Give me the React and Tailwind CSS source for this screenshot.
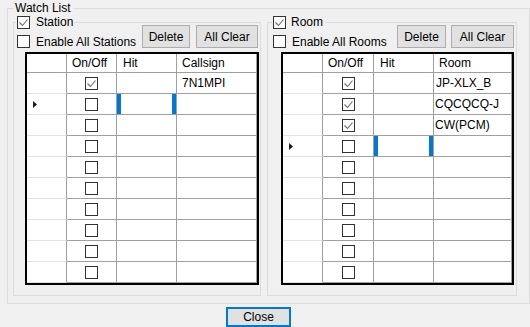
import React from "react";

const CheckMark = () => (
  <svg width="11" height="11" viewBox="0 0 11 11" className="block">
    <path d="M1.5 5.5L4.5 8.5L9.5 2.5" fill="none" stroke="#6e6e6e" strokeWidth="1.1" />
  </svg>
);

function Box({ checked }) {
  return (
    <span className="flex h-[13px] w-[13px] shrink-0 items-center justify-center border border-[#333333] bg-white">
      {checked ? <CheckMark /> : null}
    </span>
  );
}

function Btn({ children, className }) {
  return (
    <div
      className={
        "flex h-[23px] items-center justify-center border border-[#adadad] bg-[#e1e1e1] text-[12px] text-black " +
        className
      }
    >
      {children}
    </div>
  );
}

function Grid({ w, header, rows, sel }) {
  return (
    <div className="w-fit border-2 border-black bg-white">
      <div className="flex">
        <div className={"h-[19px] border-b border-r border-[#a0a0a0] " + w[0]} />
        <div className={"flex h-[19px] items-center border-b border-r border-[#a0a0a0] pl-[5px] " + w[1]}>On/Off</div>
        <div className={"flex h-[19px] items-center border-b border-r border-[#a0a0a0] pl-[6px] " + w[2]}>Hit</div>
        <div className={"flex h-[19px] items-center border-b border-r border-[#a0a0a0] pl-[5px] " + w[3]}>{header}</div>
      </div>
      {rows.map((r, i) => (
        <div className="flex" key={i}>
          <div className={"flex h-[21px] items-center border-b border-r border-b-[#e3e3e3] border-r-[#a0a0a0] pl-[6px] " + w[0]}>
            {i === sel ? (
              <svg width="4" height="7" viewBox="0 0 4 7" className="block">
                <path d="M0 0L4 3.5L0 7Z" fill="#1a1a1a" />
              </svg>
            ) : null}
          </div>
          <div className={"flex h-[21px] items-center justify-center border-b border-r border-[#a0a0a0] " + w[1]}>
            <Box checked={r.c} />
          </div>
          <div className={"flex h-[21px] justify-between border-b border-r border-[#a0a0a0] " + w[2]}>
            {i === sel ? (
              <>
                <span className="h-full w-[4px] bg-[#0078d7]" />
                <span className="h-full w-[4px] bg-[#0078d7]" />
              </>
            ) : null}
          </div>
          <div className={"flex h-[21px] items-center border-b border-r border-[#a0a0a0] " + w[3] + " " + (r.p || "")}>
            {r.t}
          </div>
        </div>
      ))}
    </div>
  );
}

const leftRows = [
  { c: true, t: "7N1MPI", p: "pl-[5px]" },
  ...Array.from({ length: 9 }, () => ({ c: false, t: "" })),
];

const rightRows = [
  { c: true, t: "JP-XLX_B", p: "pl-[2px]" },
  { c: true, t: "CQCQCQ-J", p: "pl-[1px]" },
  { c: true, t: "CW(PCM)", p: "pl-[1px]" },
  ...Array.from({ length: 7 }, () => ({ c: false, t: "" })),
];

export default function App() {
  return (
    <div className="relative h-[327px] w-[530px] overflow-hidden bg-[#f0f0f0] font-['Liberation_Sans',Arial,sans-serif] text-[12px] leading-[14px] text-black">
      <div className="relative ml-[7px] mt-[8px] h-[296px] w-[523px] border border-[#dcdcdc]">
        <div className="absolute left-[5px] top-[-8px] h-[14px] bg-[#f0f0f0] px-[2px]">Watch List</div>
        <div className="flex gap-[6px] pl-[5px] pt-[13px]">
          {/* Station group */}
          <div className="relative h-[274px] w-[248px] border border-[#dcdcdc]">
            <div className="absolute left-[2px] top-[-8px] flex h-[14px] items-center gap-[6px] bg-[#f0f0f0] pl-[1px] pr-[2px]">
              <Box checked />
              <span>Station</span>
            </div>
            <div className="mt-[2px] flex h-[23px] items-end">
              <div className="ml-[3px] flex h-[13px] items-center gap-[6px]">
                <Box />
                <span>Enable All Stations</span>
              </div>
              <div className="ml-auto mr-[2px] flex gap-[6px]">
                <Btn className="w-[48px]">Delete</Btn>
                <Btn className="w-[62px]">All Clear</Btn>
              </div>
            </div>
            <div className="ml-[11px] mt-[4px]">
              <Grid w={["w-[40px]", "w-[50px]", "w-[60px]", "w-[80px]"]} header="Callsign" rows={leftRows} sel={1} />
            </div>
          </div>
          {/* Room group */}
          <div className="relative h-[274px] w-[250px] border border-[#dcdcdc]">
            <div className="absolute left-[4px] top-[-8px] flex h-[14px] items-center gap-[5px] bg-[#f0f0f0] pl-[1px] pr-[2px]">
              <Box checked />
              <span>Room</span>
            </div>
            <div className="mt-[2px] flex h-[23px] items-end">
              <div className="ml-[5px] flex h-[13px] items-center gap-[6px]">
                <Box />
                <span>Enable All Rooms</span>
              </div>
              <div className="ml-auto mr-[2px] flex gap-[5px]">
                <Btn className="w-[49px]">Delete</Btn>
                <Btn className="w-[63px]">All Clear</Btn>
              </div>
            </div>
            <div className="ml-[13px] mt-[4px]">
              <Grid w={["w-[40px]", "w-[51px]", "w-[60px]", "w-[78px]"]} header="Room" rows={rightRows} sel={3} />
            </div>
          </div>
        </div>
      </div>
      <div className="ml-[226px] mt-[3px] flex h-[20px] w-[65px] items-center justify-center border-2 border-[#0078d7] bg-[#e1e1e1]">
        Close
      </div>
    </div>
  );
}
